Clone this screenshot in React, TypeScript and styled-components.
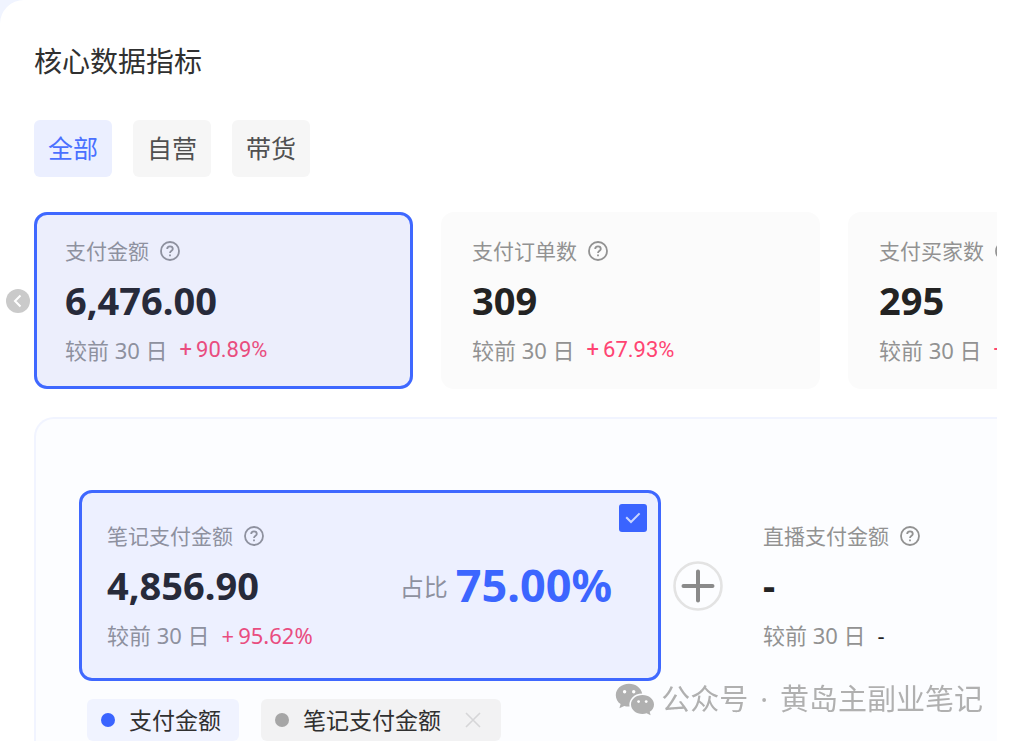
import React from "react";
import styled, { createGlobalStyle } from "styled-components";

const cjk = `"Noto Sans", "Noto Sans CJK SC", sans-serif`;

const GlobalStyle = createGlobalStyle`
  * { box-sizing: border-box; }
  body { margin: 0; background: #f0f4ff; font-family: ${cjk}; color: #303030; }
  button { font: inherit; border: 0; cursor: pointer; }
  h1, p { margin: 0; }
`;

const Page = styled.main`
  min-height: 100vh;
  overflow: hidden;
  padding: 42px 18px 0 0;
  background: #fff;
  border-top-left-radius: 24px;
`;

const Title = styled.h1`
  padding-left: 34px;
  font-size: 28px;
  line-height: 38px;
  font-weight: 400;
`;

const Tabs = styled.nav`
  display: flex;
  gap: 21px;
  padding: 40px 0 0 34px;
`;

const Tab = styled.button<{ $active?: boolean }>`
  width: 78px;
  height: 57px;
  padding: 0 0 4px;
  border-radius: 6px;
  font-size: 25px;
  font-weight: 400;
  color: ${(p) => (p.$active ? "#4a70ff" : "#505050")};
  background: ${(p) => (p.$active ? "#ebefff" : "#f6f6f6")};
`;

const Carousel = styled.section`
  display: grid;
  grid-template-columns: 24px minmax(0, 1fr);
  column-gap: 4px;
  align-items: center;
  padding: 35px 0 0 6px;
`;

const PrevButton = styled.button`
  display: grid;
  place-items: center;
  width: 24px;
  height: 24px;
  padding: 0;
  border-radius: 50%;
  background: #cacaca;
`;

const CardTrack = styled.div`
  display: flex;
  gap: 28px;
  overflow: hidden;
`;

const Card = styled.article<{ $active?: boolean }>`
  flex: 0 0 379px;
  padding: 21px 28px 20px;
  border: 3px solid ${(p) => (p.$active ? "#3f68ff" : "transparent")};
  border-radius: 13px;
  background: ${(p) => (p.$active ? "#eceefc" : "#fbfbfb")} border-box;
`;

const MetricBody = styled.div<{ $tinted?: boolean }>`
  display: flex;
  flex-direction: column;
  gap: 10px;
  white-space: nowrap;
  color: ${(p) => (p.$tinted ? "#8e919f" : "#929292")};
  --value: ${(p) => (p.$tinted ? "#272a3a" : "#232323")};
  --rise: ${(p) => (p.$tinted ? "#e94d7f" : "#ff4472")};
`;

const MetricLabel = styled.div`
  display: flex;
  align-items: center;
  gap: 11px;
  font-size: 21px;
  line-height: 30px;
`;

const MetricValue = styled.div`
  padding-bottom: 2px;
  font-size: 38px;
  line-height: 48px;
  font-weight: 700;
  color: var(--value);
`;

const Compare = styled.div`
  display: flex;
  gap: 12px;
  padding-bottom: 2px;
  font-size: 22px;
  line-height: 28px;
`;

const Change = styled.span<{ $flat?: boolean; $sans?: boolean }>`
  display: flex;
  gap: 4px;
  font-family: ${(p) => (p.$sans ? cjk : `Roboto, sans-serif`)};
  color: ${(p) => (p.$flat ? "var(--value)" : "var(--rise)")};
`;

const Panel = styled.section`
  margin: 28px 0 0 34px;
  padding: 71px 0 0 43px;
  border: 2px solid #f1f4ff;
  border-width: 2px 0 0 2px;
  border-top-left-radius: 20px;
  background: #fcfdff;
`;

const Breakdown = styled.div`
  display: flex;
  align-items: center;
`;

const NoteCard = styled.article`
  position: relative;
  display: flex;
  align-items: center;
  justify-content: space-between;
  flex: 0 0 582px;
  padding: 28px 46px 27px 25px;
  border: 3px solid #3f68ff;
  border-radius: 13px;
  background: #edf0ff;
`;

const Share = styled.div`
  display: flex;
  align-items: center;
  gap: 8px;
  padding-bottom: 2px;
  font-size: 24px;
  color: #8e919f;
`;

const ShareValue = styled.strong`
  font-size: 45px;
  line-height: 60px;
  font-weight: 700;
  color: #3c66ff;
`;

const Check = styled.span`
  position: absolute;
  top: 11px;
  right: 11px;
  display: grid;
  width: 28px;
  height: 28px;

  > * { grid-area: 1 / 1; }
  svg { place-self: center; pointer-events: none; }
`;

const CheckInput = styled.input`
  appearance: none;
  margin: 0;
  border-radius: 3px;
  background: #c8cede;
  &:checked { background: #3a64ff; }
`;

const PlusMark = styled.svg`
  flex: none;
  margin: 0 40px 0 12px;
`;

const Legend = styled.div`
  display: flex;
  gap: 22px;
  padding: 18px 0 0 8px;
`;

const Chip = styled.div<{ $active?: boolean }>`
  display: flex;
  align-items: center;
  gap: 14px;
  height: 42px;
  padding: 0 18px 0 14px;
  border-radius: 6px;
  font-size: 23px;
  line-height: 38px;
  white-space: nowrap;
  background: ${(p) => (p.$active ? "#f0f3ff" : "#f2f2f3")};
`;

const Dot = styled.span<{ $active?: boolean }>`
  width: 14px;
  height: 14px;
  border-radius: 50%;
  background: ${(p) => (p.$active ? "#3a64ff" : "#a6a6a6")};
`;

const RemoveButton = styled.button`
  display: grid;
  padding: 0 2px 0 0;
  margin-left: 10px;
  background: none;
`;

const Watermark = styled.div`
  position: fixed;
  right: 32px;
  bottom: 20px;
  display: flex;
  align-items: center;
  gap: 12px;
  font-size: 29px;
  line-height: 44px;
  white-space: nowrap;
  color: #b0b0b0;
`;

const WatermarkSource = styled.span`
  display: flex;
  align-items: center;
  gap: 6px;
`;

const HelpIcon = () => (
  <svg width="20" height="20" viewBox="0 0 20 20" fill="none" stroke="currentColor" strokeWidth="1.8" aria-hidden="true">
    <circle cx="10" cy="10" r="9" />
    <path d="M7.2 8.1C7.2 6.4 8.4 5.4 10 5.4S12.8 6.4 12.8 7.9C12.8 9.7 10 9.9 10 12.1" />
    <path d="M10 13.4V15.2" />
  </svg>
);

type MetricProps = {
  label: string;
  value: string;
  change?: string;
  tinted?: boolean;
  sans?: boolean;
};

const Metric = ({ label, value, change, tinted, sans }: MetricProps) => (
  <MetricBody $tinted={tinted}>
    <MetricLabel>
      {label}
      <HelpIcon />
    </MetricLabel>
    <MetricValue>{value}</MetricValue>
    <Compare>
      <span>较前 30 日</span>
      {change !== undefined ? (
        <Change $sans={sans}>
          <span>+</span>
          {change && <span>{change}</span>}
        </Change>
      ) : (
        <Change $flat $sans>-</Change>
      )}
    </Compare>
  </MetricBody>
);

const metrics = [
  { label: "支付金额", value: "6,476.00", change: "90.89%" },
  { label: "支付订单数", value: "309", change: "67.93%" },
  { label: "支付买家数", value: "295", change: "" },
];

export default function App() {
  const [tab, setTab] = React.useState("全部");
  return (
    <>
      <GlobalStyle />
      <Page>
        <Title>核心数据指标</Title>
        <Tabs>
          {["全部", "自营", "带货"].map((name) => (
            <Tab key={name} $active={name === tab} onClick={() => setTab(name)}>
              {name}
            </Tab>
          ))}
        </Tabs>
        <Carousel>
          <PrevButton aria-label="上一组">
            <svg width="12" height="14" viewBox="0 0 12 14" fill="none" stroke="#fff" strokeWidth="2">
              <path d="M8.5 1.5L3 7L8.5 12.5" />
            </svg>
          </PrevButton>
          <CardTrack>
            {metrics.map((m, i) => (
              <Card key={m.label} $active={i === 0}>
                <Metric {...m} tinted={i === 0} />
              </Card>
            ))}
          </CardTrack>
        </Carousel>
        <Panel>
          <Breakdown>
            <NoteCard>
              <Metric label="笔记支付金额" value="4,856.90" change="95.62%" tinted sans />
              <Share>
                占比
                <ShareValue>75.00%</ShareValue>
              </Share>
              <Check>
                <CheckInput type="checkbox" defaultChecked aria-label="笔记支付金额" />
                <svg width="16" height="12" viewBox="0 0 16 12" fill="none" stroke="#c9d5ff" strokeWidth="2">
                  <path d="M1.2 5.2L6 10L14.6 1.4" />
                </svg>
              </Check>
            </NoteCard>
            <PlusMark width="50" height="50" viewBox="0 0 50 50" fill="none" aria-hidden="true">
              <circle cx="25" cy="25" r="23.5" stroke="#e3e3e3" strokeWidth="2.6" />
              <path d="M10.5 25H39.5M25 10.5V39.5" stroke="#8a8a8a" strokeWidth="4" strokeLinecap="round" />
            </PlusMark>
            <Metric label="直播支付金额" value="-" />
          </Breakdown>
          <Legend>
            <Chip $active>
              <Dot $active />
              支付金额
            </Chip>
            <Chip>
              <Dot />
              笔记支付金额
              <RemoveButton aria-label="移除笔记支付金额">
                <svg width="16" height="16" viewBox="0 0 16 16" fill="none" stroke="#d6d6d8" strokeWidth="1.6">
                  <path d="M1 1L15 15M15 1L1 15" />
                </svg>
              </RemoveButton>
            </Chip>
          </Legend>
        </Panel>
        <Watermark>
          <WatermarkSource>
            <svg width="40" height="33" viewBox="0 0 40 33" aria-hidden="true">
              <path
                fill="#b0b0b0"
                d="M14 0.8C6.5 0.8 0.8 5.8 0.8 12.2C0.8 15.8 2.6 19 5.6 21.1L4.4 25.2L9.2 22.9C11 23.5 12.7 23.7 14.5 23.6C13.3 17 19 10.6 27.2 10.6C26 4.9 20.7 0.8 14 0.8Z"
              />
              <path
                fill="#b0b0b0"
                d="M27.5 11.9C21.1 11.9 16 16.1 16 21.4C16 26.7 21.1 30.9 27.5 30.9C28.9 30.9 30.3 30.7 31.6 30.3L35.6 32.2L34.7 28.8C37.4 27 39 24.4 39 21.4C39 16.1 33.9 11.9 27.5 11.9Z"
              />
              <g fill="#fff">
                <circle cx="9.6" cy="8.8" r="1.7" />
                <circle cx="18.7" cy="8.8" r="1.7" />
                <circle cx="23.6" cy="18.6" r="1.4" />
                <circle cx="31.2" cy="18.6" r="1.4" />
              </g>
            </svg>
            公众号
          </WatermarkSource>
          <span>·</span>
          <span>黄岛主副业笔记</span>
        </Watermark>
      </Page>
    </>
  );
}
